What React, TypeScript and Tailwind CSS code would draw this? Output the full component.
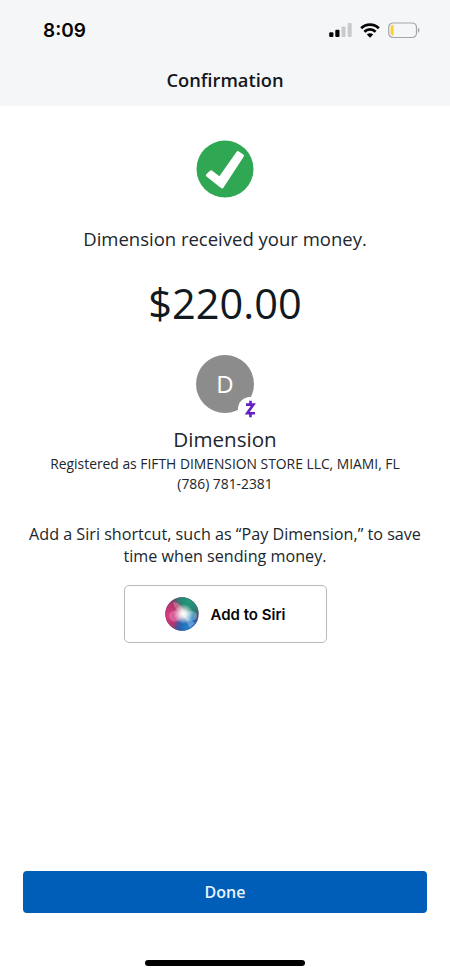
import type { ReactNode } from 'react';

interface ButtonProps {
  className: string;
  children: ReactNode;
}

function Button({ className, children }: ButtonProps) {
  return (
    <button type="button" className={`flex items-center justify-center ${className}`}>
      {children}
    </button>
  );
}

function SignalIcon() {
  return (
    <svg width="24" height="16" viewBox="0 0 24 16" className="block">
      <rect x="0.2" y="10.2" width="4.2" height="4.8" rx="1.1" fill="#050505" />
      <rect x="6.3" y="7.7" width="4.2" height="7.3" rx="1.1" fill="#050505" />
      <rect x="12.5" y="4.5" width="4" height="10.5" rx="1.1" fill="#c9cacc" />
      <rect x="18.7" y="1" width="4" height="14" rx="1.1" fill="#c9cacc" />
    </svg>
  );
}

function WifiIcon() {
  return (
    <svg width="20" height="15" viewBox="0 0 20 15" className="block">
      <g fill="none" stroke="#050505" strokeWidth="2.7">
        <path d="M1.2 5.2C6.1 0.4 13.9 0.4 18.8 5.2" />
        <path d="M4.4 8.7C7.5 5.7 12.5 5.7 15.6 8.7" />
      </g>
      <path d="M6.8 11.4C8.6 9.7 11.4 9.7 13.2 11.4L10 14.7Z" fill="#050505" />
    </svg>
  );
}

function BatteryIcon() {
  return (
    <svg width="33" height="17" viewBox="0 0 33 17" className="block">
      <rect x="0.7" y="1" width="27.8" height="14.5" rx="4.4" fill="none" stroke="#a3a5a8" strokeWidth="1.2" />
      <path d="M30 5.8C31.9 6.5 31.9 10 30 10.7Z" fill="#a3a5a8" />
      <path d="M5.6 3V13.5H5C3.5 13.5 2.6 12.6 2.6 11.1V5.4C2.6 3.9 3.5 3 5 3Z" fill="#f8d038" />
    </svg>
  );
}

function CheckIcon() {
  return (
    <svg width="58" height="58" viewBox="0 0 58 58" className="block">
      <circle cx="29" cy="29" r="28.5" fill="#30a853" />
      <path
        d="M10.3 34.3L14 30.8Q15 29.9 16.2 30.8L23.4 36.3L40.6 11.8Q41.5 10.5 42.8 11.4L47.3 14.6Q48.5 15.5 47.6 16.8L27.4 47.7Q26.4 49.2 25 48.1L10.5 36.6Q9.3 35.4 10.3 34.3Z"
        fill="#fff"
      />
    </svg>
  );
}

function ZelleIcon() {
  return (
    <svg width="24" height="24" viewBox="0 0 24 24" className="block">
      <circle cx="12" cy="12" r="12" fill="#fff" />
      <g fill="none" stroke="#6420c4" strokeWidth="2.6">
        <path d="M8 7.6H15.4L9.2 16.2H17" />
        <path d="M12.5 3.8V7.6M12.5 16.2V20.2" />
      </g>
    </svg>
  );
}

function SiriIcon() {
  return (
    <svg width="34" height="34" viewBox="0 0 34 34" className="block">
      <defs>
        <radialGradient id="siri-glow">
          <stop offset="0" stopColor="#fff" />
          <stop offset="0.3" stopColor="#fff" stopOpacity="0.85" />
          <stop offset="1" stopColor="#fff" stopOpacity="0" />
        </radialGradient>
        <radialGradient id="siri-pink">
          <stop offset="0" stopColor="#d83f7f" />
          <stop offset="0.6" stopColor="#c2326f" stopOpacity="0.85" />
          <stop offset="1" stopColor="#c2326f" stopOpacity="0" />
        </radialGradient>
        <radialGradient id="siri-green">
          <stop offset="0" stopColor="#1f9c7c" />
          <stop offset="0.6" stopColor="#228a74" stopOpacity="0.85" />
          <stop offset="1" stopColor="#228a74" stopOpacity="0" />
        </radialGradient>
        <radialGradient id="siri-blue">
          <stop offset="0" stopColor="#2384d2" />
          <stop offset="0.6" stopColor="#1d68b4" stopOpacity="0.85" />
          <stop offset="1" stopColor="#1d68b4" stopOpacity="0" />
        </radialGradient>
        <clipPath id="siri-orb">
          <circle cx="17" cy="17" r="16.7" />
        </clipPath>
      </defs>
      <g clipPath="url(#siri-orb)">
        <rect width="34" height="34" fill="#6a3f6c" />
        <circle cx="24" cy="5" r="17" fill="url(#siri-green)" />
        <circle cx="4" cy="18" r="17" fill="url(#siri-pink)" />
        <circle cx="23" cy="30" r="15" fill="url(#siri-blue)" />
        <ellipse cx="10" cy="19" rx="6" ry="5.5" fill="#f08fc0" fillOpacity="0.45" />
        <ellipse cx="26" cy="19" rx="6" ry="5" fill="#70cce8" fillOpacity="0.55" />
        <path d="M8 5C14 5 18 10 20 17C14 16 9 12 8 5Z" fill="#ee9cae" fillOpacity="0.45" />
        <path d="M17 17L30 26L25 31Z" fill="#b9d8fa" fillOpacity="0.4" />
        <circle cx="18.5" cy="17" r="10" fill="url(#siri-glow)" />
      </g>
    </svg>
  );
}

export default function App() {
  return (
    <div className="flex h-[975px] w-[450px] flex-col overflow-hidden bg-white font-['Open_Sans',sans-serif] text-[#20262c]">
      <header className="h-[106px] shrink-0 bg-[#f5f6f8]">
        <div className="flex h-[60px] items-center justify-between pl-[43px] pr-[29px]">
          <span className="pt-px font-['Inter',sans-serif] text-[19px] font-semibold leading-6 text-[#050505]">8:09</span>
          <div className="flex items-center gap-2">
            <div className="flex items-center gap-[7px]">
              <SignalIcon />
              <WifiIcon />
            </div>
            <BatteryIcon />
          </div>
        </div>
        <h1 className="text-center text-[18.3px] font-semibold leading-10 text-[#14181c]">Confirmation</h1>
      </header>

      <main className="flex flex-1 flex-col items-center pt-[34px] text-center">
        <CheckIcon />
        <p className="mt-[27px] text-[18.5px] leading-7">Dimension received your money.</p>
        <p className="mt-[22px] text-[41.5px] leading-[56px] text-[#101820]">$220.00</p>

        <div className="relative mt-6 flex size-[58px] items-center justify-center rounded-full bg-[#8c8c8c]">
          <span className="text-[24px] leading-8 text-white">D</span>
          <div className="absolute left-[42px] top-[42px]">
            <ZelleIcon />
          </div>
        </div>

        <h2 className="mt-3 text-[20.6px] leading-7">Dimension</h2>
        <p className="mt-px text-[13.85px] leading-5">Registered as FIFTH DIMENSION STORE LLC, MIAMI, FL</p>
        <p className="text-[13.85px] leading-5">(786) 781-2381</p>

        <p className="mt-[29px] text-[16.15px] leading-[22px]">
          Add a Siri shortcut, such as “Pay Dimension,” to save
          <br />
          time when sending money.
        </p>

        <Button className="mt-[18px] h-[58px] w-[203px] gap-3 rounded-[5px] border-[1.5px] border-[#b9b9bb] bg-white">
          <SiriIcon />
          <span className="pt-0.5 font-['Inter',sans-serif] text-[15px] font-semibold text-[#050505]">Add to Siri</span>
        </Button>
      </main>

      <footer className="flex flex-col items-center px-[23px] pb-[9px]">
        <Button className="h-[42px] w-full rounded-[4px] bg-[#005eb8] text-[16px] font-semibold text-[#e8f5ff]">
          Done
        </Button>
        <div className="mt-[47px] h-[6px] w-[160px] rounded-full bg-black" />
      </footer>
    </div>
  );
}
